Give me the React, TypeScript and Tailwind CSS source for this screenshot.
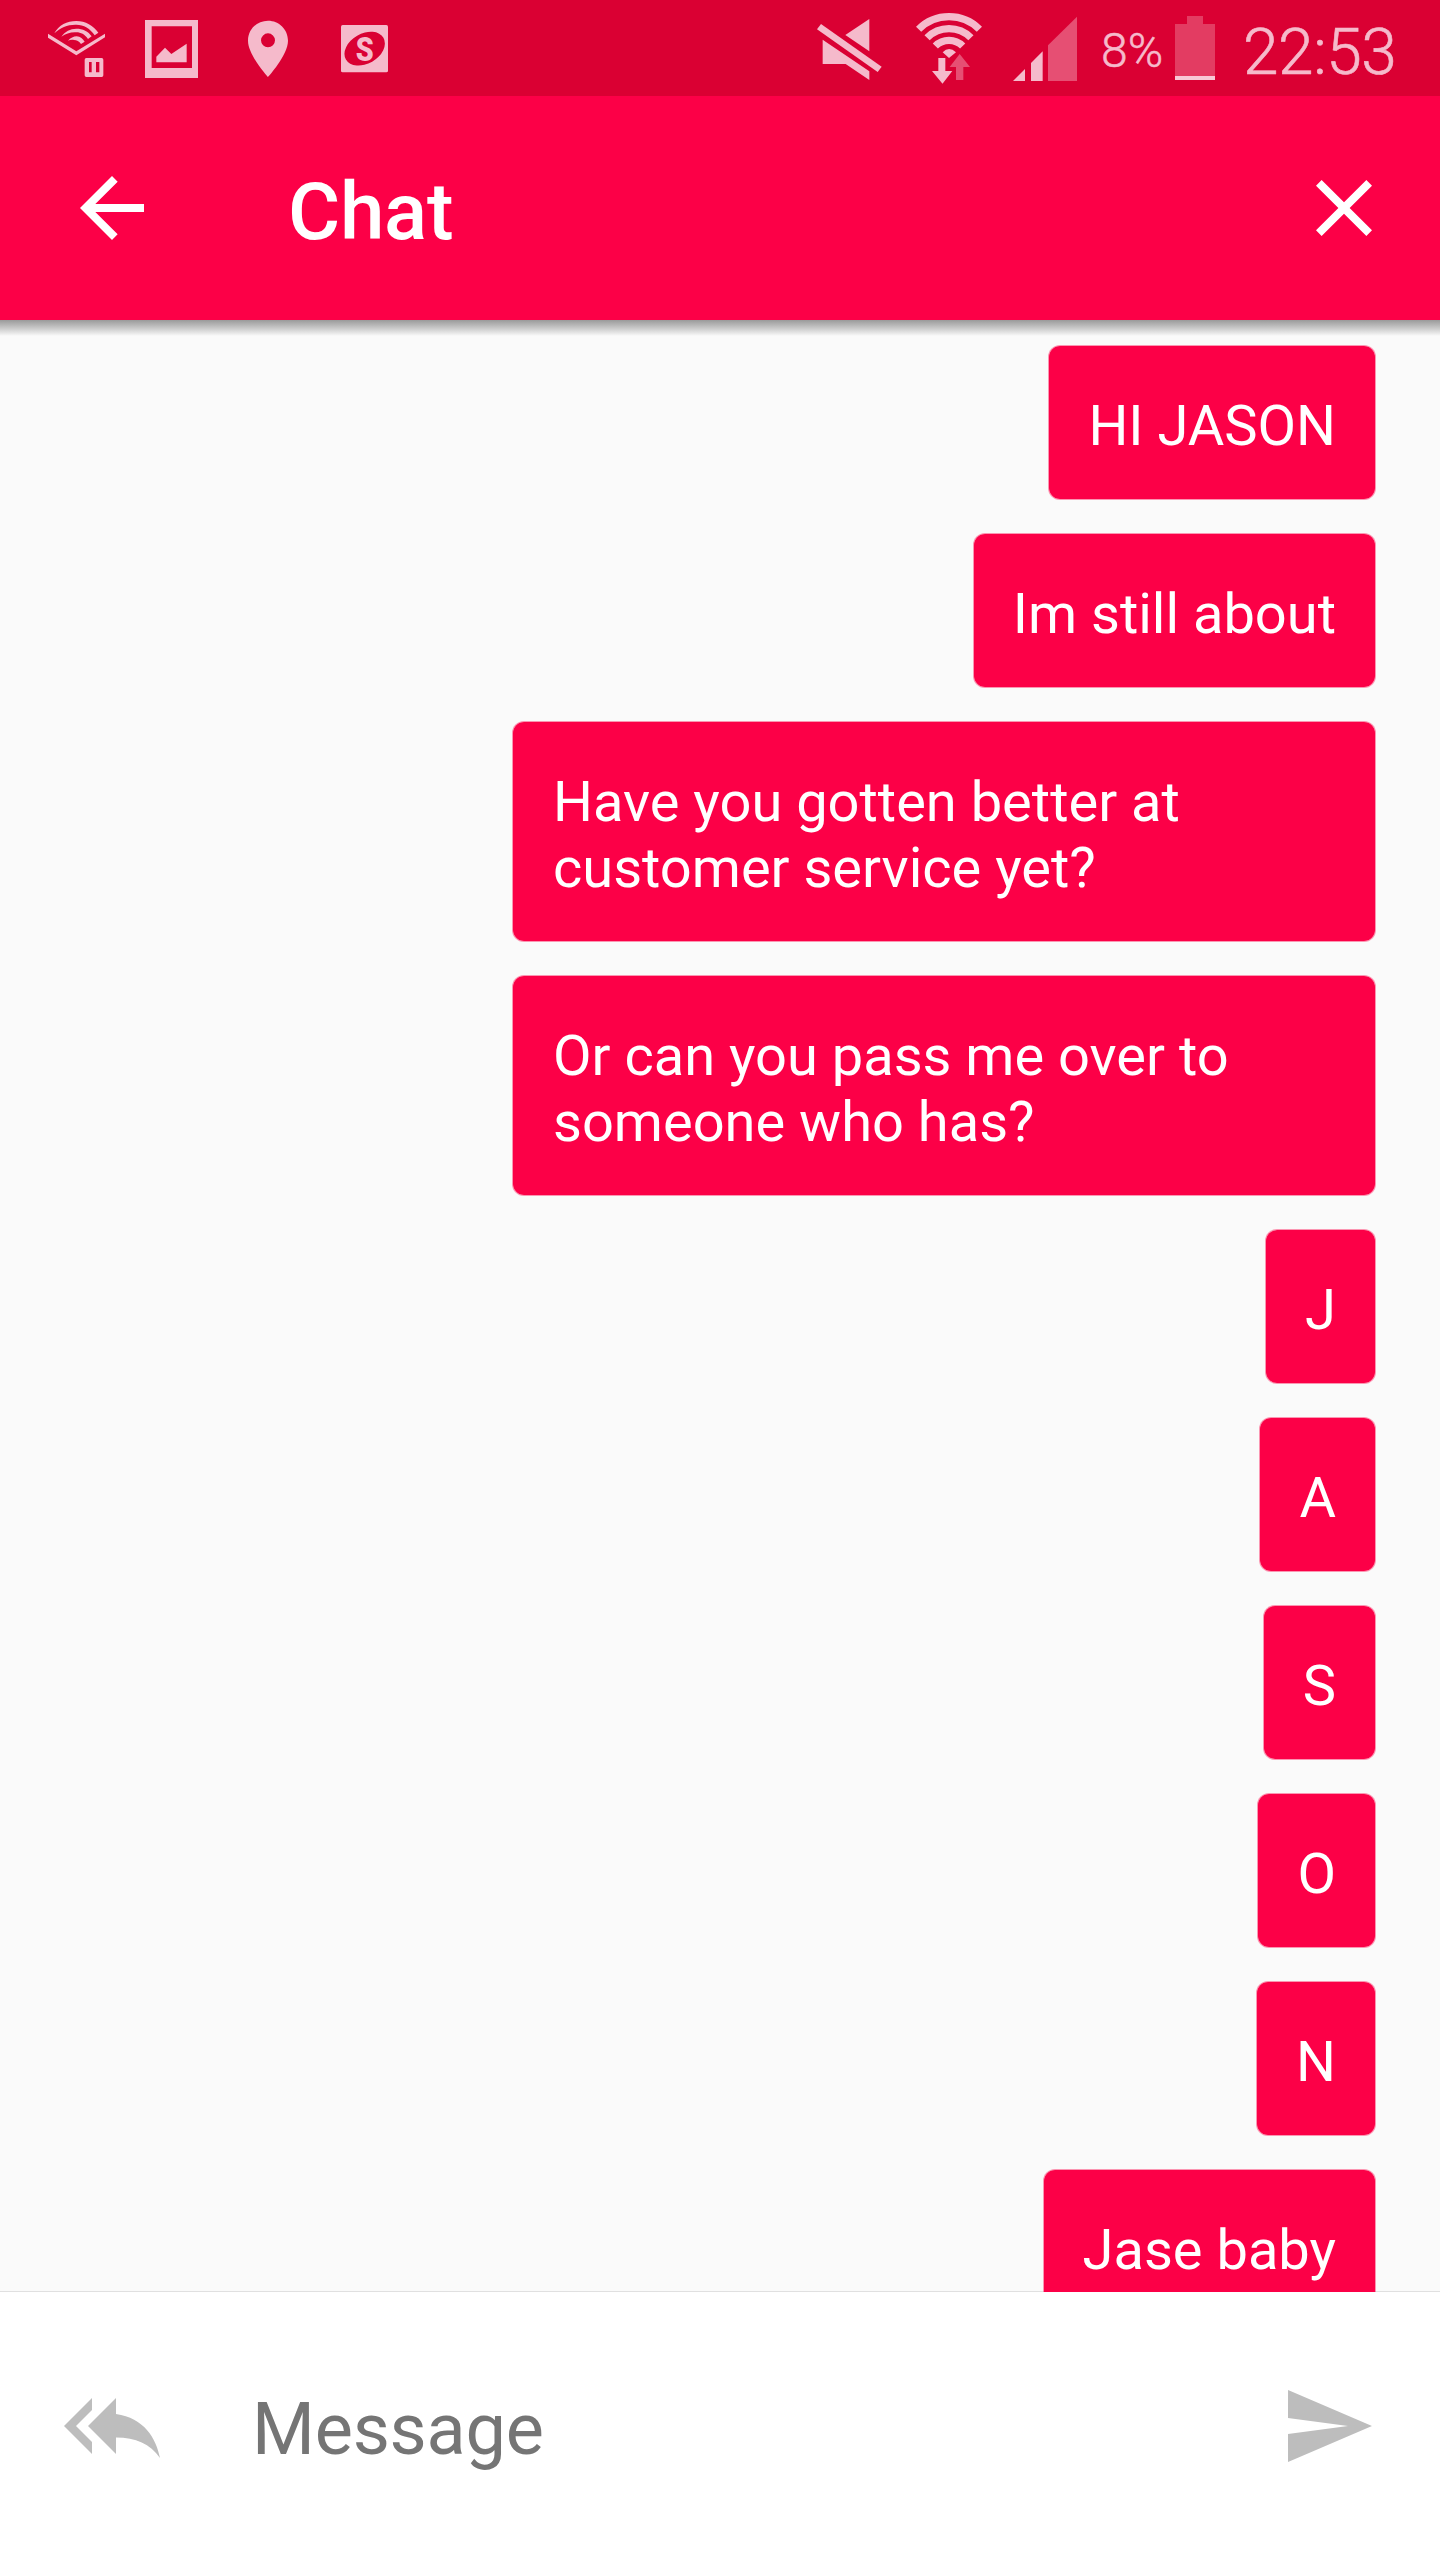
import { clsx } from "clsx";

interface Message {
  id: number;
  text: string;
  wide?: boolean;
}

const messages: Message[] = [
  { id: 1, text: "HI JASON" },
  { id: 2, text: "Im still about" },
  { id: 3, text: "Have you gotten better at customer service yet?", wide: true },
  { id: 4, text: "Or can you pass me over to someone who has?", wide: true },
  { id: 5, text: "J" },
  { id: 6, text: "A" },
  { id: 7, text: "S" },
  { id: 8, text: "O" },
  { id: 9, text: "N" },
  { id: 10, text: "Jase baby" },
];

function AudiobookIcon() {
  return (
    <svg className="h-24 w-[57px] shrink-0" viewBox="53 0 171 288" fill="currentColor">
      <path d="M53 101L138 154L224 101V112L138 166L53 113Z" />
      <path d="M72 100C85 75 110 63 138 63C165 63 190 77 204 98L193 106C180 86 160 74 138 74C113 73 90 83 72 100Z" />
      <path d="M93 110C104 94 120 86 138 86C157 86 174 94 184 109L173 117C163 103 152 97 138 97C120 96 107 101 93 110Z" />
      <path d="M113 122C120 114 130 109 139 109C150 110 158 117 163 125L152 132C147 124 139 120 131 120C124 119 118 120 113 122Z" />
      <path
        fillRule="evenodd"
        d="M168 174H214Q219 174 219 179V226Q219 231 214 231H168Q163 231 163 226V179Q163 174 168 174ZM176 186V217H184V186ZM197 186V217H207V186Z"
      />
    </svg>
  );
}

function ScreenshotIcon() {
  return (
    <svg className="h-24 w-[53px] shrink-0" viewBox="345 0 159 288" fill="currentColor">
      <path fillRule="evenodd" d="M345 60H504V234H345ZM365 79V204H486V79Z" />
      <path d="M379 187V170L405 143L424 162L470 131V187Z" />
    </svg>
  );
}

function LocationIcon() {
  return (
    <svg className="h-24 w-10 shrink-0" viewBox="654 0 120 288" fill="currentColor">
      <path
        fillRule="evenodd"
        d="M714 62C681 62 654 88 654 122C654 165 714 231 714 231S774 165 774 122C774 88 747 62 714 62ZM714 100A21 21 0 1 1 714 142A21 21 0 1 1 714 100Z"
      />
    </svg>
  );
}

function BadgeIcon() {
  return (
    <svg className="h-24 w-[47px] shrink-0" viewBox="931 0 141 288" fill="currentColor">
      <rect x="931" y="75" width="141" height="142" rx="5" />
      <ellipse cx="1002" cy="146" rx="65" ry="45" transform="rotate(-30 1002 146)" fill="#da0033" />
      <text
        x="0"
        y="0"
        transform="translate(1002.5 182) scale(.86 1)"
        textAnchor="middle"
        className="font-['Roboto'] text-[100px] font-black"
      >
        S
      </text>
    </svg>
  );
}

function MuteIcon() {
  return (
    <svg className="h-24 w-[65px] shrink-0" viewBox="80 0 195 288" fill="currentColor">
      <path d="M92 72L274 200L262 216L80 88Z" />
      <path d="M237 57L165 105L237 154Z" />
      <path d="M97 119L237 214V240L166 192H97Z" />
    </svg>
  );
}

function WifiIcon() {
  return (
    <svg className="h-24 w-[66px] shrink-0" viewBox="378 0 198 288" fill="currentColor">
      <g fill="none" stroke="currentColor" strokeWidth="22">
        <path d="M385.8 87.8A129 129 0 0 1 568.2 87.8" />
        <path d="M411.2 113.2A93 93 0 0 1 542.8 113.2" />
        <path d="M436 138A58 58 0 0 1 518 138" />
      </g>
      <path d="M477 174L458 157Q477 137 498 157Z" />
      <path d="M445 174H466V213H487L457.500 251L426 213H445Z" />
      <path className="text-[#e64f73]" d="M509 162L540 201H520V240H498V201H479Z" />
    </svg>
  );
}

function SignalIcon() {
  return (
    <svg className="h-24 w-16 shrink-0" viewBox="669 0 192 288" fill="currentColor">
      <path d="M669 243L705 207V243Z" />
      <path d="M723 243V189L758 154V243Z" />
      <path className="text-[#e64f73]" d="M774 243V136L861 50V243Z" />
    </svg>
  );
}

function BatteryIcon() {
  return (
    <div className="flex h-16 w-10 shrink-0 flex-col items-center">
      <div className="h-2 w-4 bg-[#e33c62]" />
      <div className="h-[52px] w-full bg-[#e33c62]" />
      <div className="h-1 w-full bg-[#f8c9d6]" />
    </div>
  );
}

function StatusBar() {
  return (
    <div className="flex h-24 items-center justify-between bg-[#da0033] pr-[43px] pl-[47.6px] text-[#f5bacb]">
      <div className="flex items-center">
        <AudiobookIcon />
        <div className="ml-[40.4px] flex">
          <ScreenshotIcon />
        </div>
        <div className="ml-[50px] flex">
          <LocationIcon />
        </div>
        <div className="ml-[52.6px] flex">
          <BadgeIcon />
        </div>
      </div>
      <div className="flex items-center">
        <MuteIcon />
        <div className="ml-[34.4px] flex">
          <WifiIcon />
        </div>
        <div className="ml-[31px] flex">
          <SignalIcon />
        </div>
        <span className="ml-6 w-[61px] pt-1.5 text-[48px] leading-none font-light whitespace-nowrap [-webkit-text-stroke:0.5px]">
          8%
        </span>
        <div className="ml-[13px]">
          <BatteryIcon />
        </div>
        <span className="ml-[28px] w-[154px] pt-2.5 text-[64px] leading-none font-light tracking-[-0.4px] whitespace-nowrap [-webkit-text-stroke:0.6px]">
          22:53
        </span>
      </div>
    </div>
  );
}

function AppBar() {
  return (
    <header className="flex h-56 items-center bg-[#fc0047] px-[64px] pr-12 text-white">
      <button className="size-24">
        <svg viewBox="0 0 24 24" fill="currentColor">
          <path d="M20 11H7.83l5.59-5.59L12 4l-8 8 8 8 1.41-1.41L7.83 13H20v-2z" />
        </svg>
      </button>
      <h1 className="ml-32 flex-1 pt-[7px] text-[80px] leading-none font-medium tracking-[-0.3px]">Chat</h1>
      <button className="size-24">
        <svg viewBox="0 0 24 24" fill="currentColor">
          <path d="M19 6.41L17.59 5 12 10.59 6.41 5 5 6.41 10.59 12 5 17.59 6.41 19 12 13.41 17.59 19 19 17.59 13.41 12z" />
        </svg>
      </button>
    </header>
  );
}

function Bubble({ text, wide }: Message) {
  return (
    <div
      className={clsx(
        "shrink-0 rounded-[12px] border border-[#fc0047]/40 bg-[#fc0047] bg-clip-padding pt-[47px] pb-10 text-[56px] leading-[66px] text-white",
        wide ? "w-[864px] px-10" : "px-[39px] whitespace-nowrap",
      )}
    >
      {text}
    </div>
  );
}

function Composer() {
  return (
    <footer className="flex h-[268px] items-center bg-white px-16 text-[#bdbdbd]">
      <svg className="size-24" viewBox="0 0 24 24" fill="currentColor">
        <path d="M7 8V5l-7 7 7 7v-3l-4-4 4-4zm6 1V5l-7 7 7 7v-4.1c5 0 8.5 1.6 11 5.1-1-5-4-10-11-11z" />
      </svg>
      <span className="ml-[92px] flex-1 pt-2 text-[72px] leading-none tracking-[-0.2px] text-[#757575]">Message</span>
      <svg className="size-24" viewBox="0 0 24 24" fill="currentColor">
        <path d="M2.01 21L23 12 2.01 3 2 10l15 2-15 2z" />
      </svg>
    </footer>
  );
}

export default function App() {
  return (
    <div className="flex h-[2560px] w-[1440px] flex-col overflow-hidden font-['Roboto',sans-serif]">
      <StatusBar />
      <AppBar />
      <main className="flex min-h-0 flex-1 flex-col overflow-hidden bg-[#fafafa] shadow-[inset_0_-1px_0_#e0e0e0]">
        <div className="h-4 shrink-0 bg-linear-to-b from-[#9a9a9a] via-[#c8c8c8] to-[#fafafa]" />
        <div className="flex flex-col items-end gap-[33px] pt-[9px] pr-16">
          {messages.map((message) => (
            <Bubble key={message.id} {...message} />
          ))}
        </div>
      </main>
      <Composer />
    </div>
  );
}
